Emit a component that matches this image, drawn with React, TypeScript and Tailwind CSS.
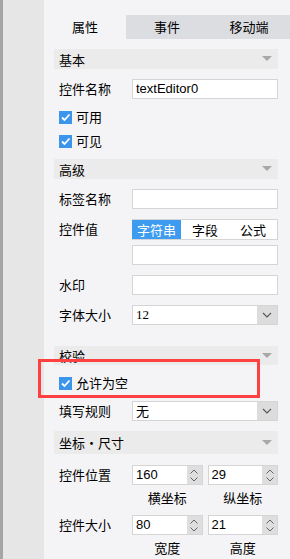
import React from 'react';

const cjk = '"Noto Sans CJK SC", "Liberation Sans", sans-serif';

function SectionHeader({ title, className = '' }: { title: string; className?: string }) {
  return (
    <div className={`flex items-center justify-between bg-[#ebebeb] pl-[5px] pr-[6px] ${className}`}>
      <span className="text-[13px] text-black leading-none">{title}</span>
      <svg width="10" height="6" viewBox="0 0 10 6">
        <path d="M0 0h10L5 5z" fill="#a8a8a8" />
      </svg>
    </div>
  );
}

function Checkbox() {
  return (
    <span className="w-[13px] h-[13px] bg-[#3b95ea] flex items-center justify-center shrink-0">
      <svg width="11" height="11" viewBox="0 0 11 11">
        <path d="M2 5.5l2.5 2.5L9.5 2.5" stroke="#fff" strokeWidth="1.8" fill="none" />
      </svg>
    </span>
  );
}

function Chevron() {
  return (
    <div className="w-[20px] h-full bg-[#dcdcdc] flex items-center justify-center shrink-0">
      <svg width="10" height="6" viewBox="0 0 10 6">
        <path d="M1 1l4 4 4-4" stroke="#555" strokeWidth="1.1" fill="none" />
      </svg>
    </div>
  );
}

function Spinner() {
  return (
    <div className="w-[15px] h-full bg-[#dedede] flex flex-col items-center justify-center gap-[3px] shrink-0">
      <svg width="8" height="5" viewBox="0 0 8 5">
        <path d="M0.5 4.5L4 1l3.5 3.5" stroke="#666" strokeWidth="1" fill="none" />
      </svg>
      <svg width="8" height="5" viewBox="0 0 8 5">
        <path d="M0.5 0.5L4 4l3.5-3.5" stroke="#666" strokeWidth="1" fill="none" />
      </svg>
    </div>
  );
}

// label column is 78px wide, the field takes the rest
function Row({ label, children, className = '' }: { label: string; children?: React.ReactNode; className?: string }) {
  return (
    <div className={`grid grid-cols-[78px_1fr] items-center ${className}`}>
      <span className="pl-[5px] text-[13px] text-black whitespace-nowrap">{label}</span>
      <div className="min-w-0">{children}</div>
    </div>
  );
}

function NumBox({ value }: { value: string }) {
  return (
    <div className="flex h-[20px] w-[71px] border border-[#d5d5d5] bg-white">
      <span
        className="flex-1 pl-[3px] text-[13px] leading-[18px] text-black"
        style={{ fontFamily: '"Liberation Sans", sans-serif' }}
      >
        {value}
      </span>
      <Spinner />
    </div>
  );
}

export default function App() {
  return (
    <div className="relative flex w-[290px] h-[559px] overflow-hidden" style={{ fontFamily: cjk }}>
      {/* left strip */}
      <div className="w-[44px] shrink-0 h-full bg-[#e6e6e6] border-l-[3px] border-[#a5a5a5]" />

      {/* property panel */}
      <div className="flex-1 min-w-0 h-full bg-[#f4f4f6] pt-[15px]">
        <div className="flex h-[24px] text-[13px] text-black">
          <div className="w-[82px] flex items-center justify-center bg-[#f4f4f6]">属性</div>
          <div className="w-[82px] flex items-center justify-center bg-[#dcdde1]">事件</div>
          <div className="flex-1 flex items-center justify-center bg-[#dcdde1]">移动端</div>
        </div>

        <div className="pl-[10px] pr-[12px]">
          <SectionHeader title="基本" className="h-[20px] mt-[10px]" />
          <Row label="控件名称" className="h-[20px] mt-[10px]">
            <div
              className="h-[20px] border border-[#d5d5d5] bg-white pl-[3px] text-[13px] leading-[18px] text-black"
              style={{ fontFamily: '"Liberation Sans", sans-serif' }}
            >
              textEditor0
            </div>
          </Row>
          <div className="flex items-center gap-[4px] pl-[5px] h-[24px] mt-[6px]">
            <Checkbox />
            <span className="text-[13px] text-black">可用</span>
          </div>
          <div className="flex items-center gap-[4px] pl-[5px] h-[24px]">
            <Checkbox />
            <span className="text-[13px] text-black">可见</span>
          </div>

          <SectionHeader title="高级" className="h-[20px] mt-[6px]" />
          <Row label="标签名称" className="h-[20px] mt-[10px]">
            <div className="h-[20px] border border-[#d5d5d5] bg-white" />
          </Row>
          <div className="grid grid-cols-[78px_1fr] mt-[10px]">
            <span className="pl-[5px] text-[13px] text-black leading-[20px]">控件值</span>
            <div className="min-w-0">
              <div className="flex h-[21px] border-y border-r border-[#d5d5d5] bg-white text-[13px]">
                <div className="w-[49px] bg-[#3d9bf0] text-white flex items-center justify-center">字符串</div>
                <div className="flex-1 flex items-center justify-center text-black">字段</div>
                <div className="flex-1 flex items-center justify-center text-black">公式</div>
              </div>
              <div className="h-[20px] mt-[5px] border border-[#d5d5d5] bg-white" />
            </div>
          </div>
          <Row label="水印" className="h-[20px] mt-[10px]">
            <div className="h-[20px] border border-[#d5d5d5] bg-white" />
          </Row>
          <Row label="字体大小" className="h-[20px] mt-[10px]">
            <div className="flex h-[20px] border border-[#d5d5d5] bg-white">
              <span
                className="flex-1 pl-[3px] text-[13px] leading-[18px] text-black"
                style={{ fontFamily: '"Liberation Serif", serif' }}
              >
                12
              </span>
              <Chevron />
            </div>
          </Row>

          <SectionHeader title="校验" className="h-[19px] mt-[21px]" />
          <div className="flex items-center gap-[4px] pl-[5px] h-[36px]">
            <Checkbox />
            <span className="text-[13px] text-black">允许为空</span>
          </div>
          <Row label="填写规则" className="h-[20px]">
            <div className="flex h-[20px] border border-[#d5d5d5] bg-white">
              <span className="flex-1 pl-[3px] text-[13px] leading-[18px] text-black">无</span>
              <Chevron />
            </div>
          </Row>

          <SectionHeader title="坐标・尺寸" className="h-[23px] mt-[10px]" />
          <Row label="控件位置" className="h-[20px] mt-[11px]">
            <div className="flex gap-[5px]">
              <NumBox value="160" />
              <NumBox value="29" />
            </div>
          </Row>
          <div className="flex pl-[78px] h-[28px] text-[13px] text-black">
            <span className="w-[71px] text-center leading-[26px]">横坐标</span>
            <span className="w-[71px] ml-[5px] text-center leading-[26px]">纵坐标</span>
          </div>
          <Row label="控件大小" className="h-[20px] mt-[2px]">
            <div className="flex gap-[5px]">
              <NumBox value="80" />
              <NumBox value="21" />
            </div>
          </Row>
          <div className="flex pl-[78px] h-[28px] text-[13px] text-black">
            <span className="w-[71px] text-center leading-[26px]">宽度</span>
            <span className="w-[71px] ml-[5px] text-center leading-[26px]">高度</span>
          </div>
        </div>
      </div>

      {/* highlight box */}
      <div className="absolute left-[38px] top-[359px] w-[222px] h-[39px] border-[3px] border-[#ff4040]" />
    </div>
  );
}
